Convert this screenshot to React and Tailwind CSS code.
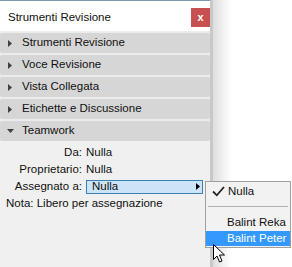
const sections = ['Strumenti Revisione', 'Voce Revisione', 'Vista Collegata', 'Etichette e Discussione'];

function Caret({ open }) {
  return open ? (
    <svg width="7" height="4" viewBox="0 0 7 4" className="ml-[7px] mr-[8px]">
      <path d="M0 0h7L3.5 4z" fill="#404040" />
    </svg>
  ) : (
    <svg width="4" height="7" viewBox="0 0 4 7" className="ml-[8px] mr-[10px]">
      <path d="M0 0v7l4-3.5z" fill="#404040" />
    </svg>
  );
}

function SectionRow({ label, open }) {
  return (
    <div className="flex h-5 items-center rounded-[2px] bg-[#d6d6d6]">
      <Caret open={open} />
      <span>{label}</span>
    </div>
  );
}

function Field({ label, children }) {
  return (
    <div className="flex h-[17px] items-center">
      <span className="w-[82px] text-right">{label}</span>
      <div className="ml-[4px] flex items-center">{children}</div>
    </div>
  );
}

function Cursor() {
  return (
    <svg width="12" height="20" viewBox="0 0 12 20" className="absolute left-[213px] top-[244px]">
      <path d="M0.5 0.5v15l3.5-3.5 2.5 6 2.5-1-2.5-6h5z" fill="#fff" stroke="#000" strokeWidth="1" strokeLinejoin="round" />
    </svg>
  );
}

export default function App() {
  return (
    <div className="relative flex h-[267px] w-[292px] overflow-hidden whitespace-nowrap bg-white font-['Liberation_Sans',Arial,sans-serif] text-[11.5px] text-[#111]">
      <div className="flex w-[210px] flex-col bg-[#f0f0f0]">
        <div className="h-px bg-[#7d98b4]" />
        <div className="flex h-[30px] items-start justify-between bg-white pl-2 pt-[7px]">
          <span className="mt-[1px]">Strumenti Revisione</span>
          <button className="flex h-[19px] w-[19px] items-center justify-center bg-[#c75050] text-[11px] font-bold leading-none text-white">
            x
          </button>
        </div>
        <div className="flex flex-col gap-[2px] bg-[#ececec] pt-[2px]">
          {sections.map((s) => (
            <SectionRow key={s} label={s} />
          ))}
          <SectionRow label="Teamwork" open />
        </div>
        <div className="flex flex-col pt-[3px]">
          <Field label="Da:">Nulla</Field>
          <Field label="Proprietario:">Nulla</Field>
          <Field label="Assegnato a:">
            <div className="flex h-[14px] w-[117px] items-center justify-between border border-[#3c7fb1] bg-[#cce4f7] pl-[5px] pr-[2px]">
              <span>Nulla</span>
              <svg width="4" height="7" viewBox="0 0 4 7">
                <path d="M0 0v7l4-3.5z" fill="#000" />
              </svg>
            </div>
          </Field>
          <div className="flex h-[17px] items-center pl-[6px]">Nota: Libero per assegnazione</div>
        </div>
      </div>
      <div className="w-[3px] bg-[#c8c8c8]" />
      <div className="w-[18px] bg-gradient-to-r from-[#dedede] to-white" />

      <div className="absolute left-[205px] top-[181px] flex w-[86px] flex-col border border-[#a0a0a0] bg-[#f2f2f2] py-px">
        <div className="flex h-[17px] items-center">
          <svg width="13" height="11" viewBox="0 0 13 11" className="ml-[6px] mr-[3px]">
            <path d="M1 5.5l3.8 3.8L12 1" fill="none" stroke="#222" strokeWidth="1.8" />
          </svg>
          <span>Nulla</span>
        </div>
        <div className="mx-[2px] mb-[8px] mt-[6px] h-px bg-[#b0b0b0]" />
        <div className="flex h-[16px] items-center pl-[21px]">Balint Reka</div>
        <div className="flex h-[15px] items-center bg-[#3399ff] pl-[21px] text-white">Balint Peter</div>
      </div>
      <Cursor />
    </div>
  );
}
